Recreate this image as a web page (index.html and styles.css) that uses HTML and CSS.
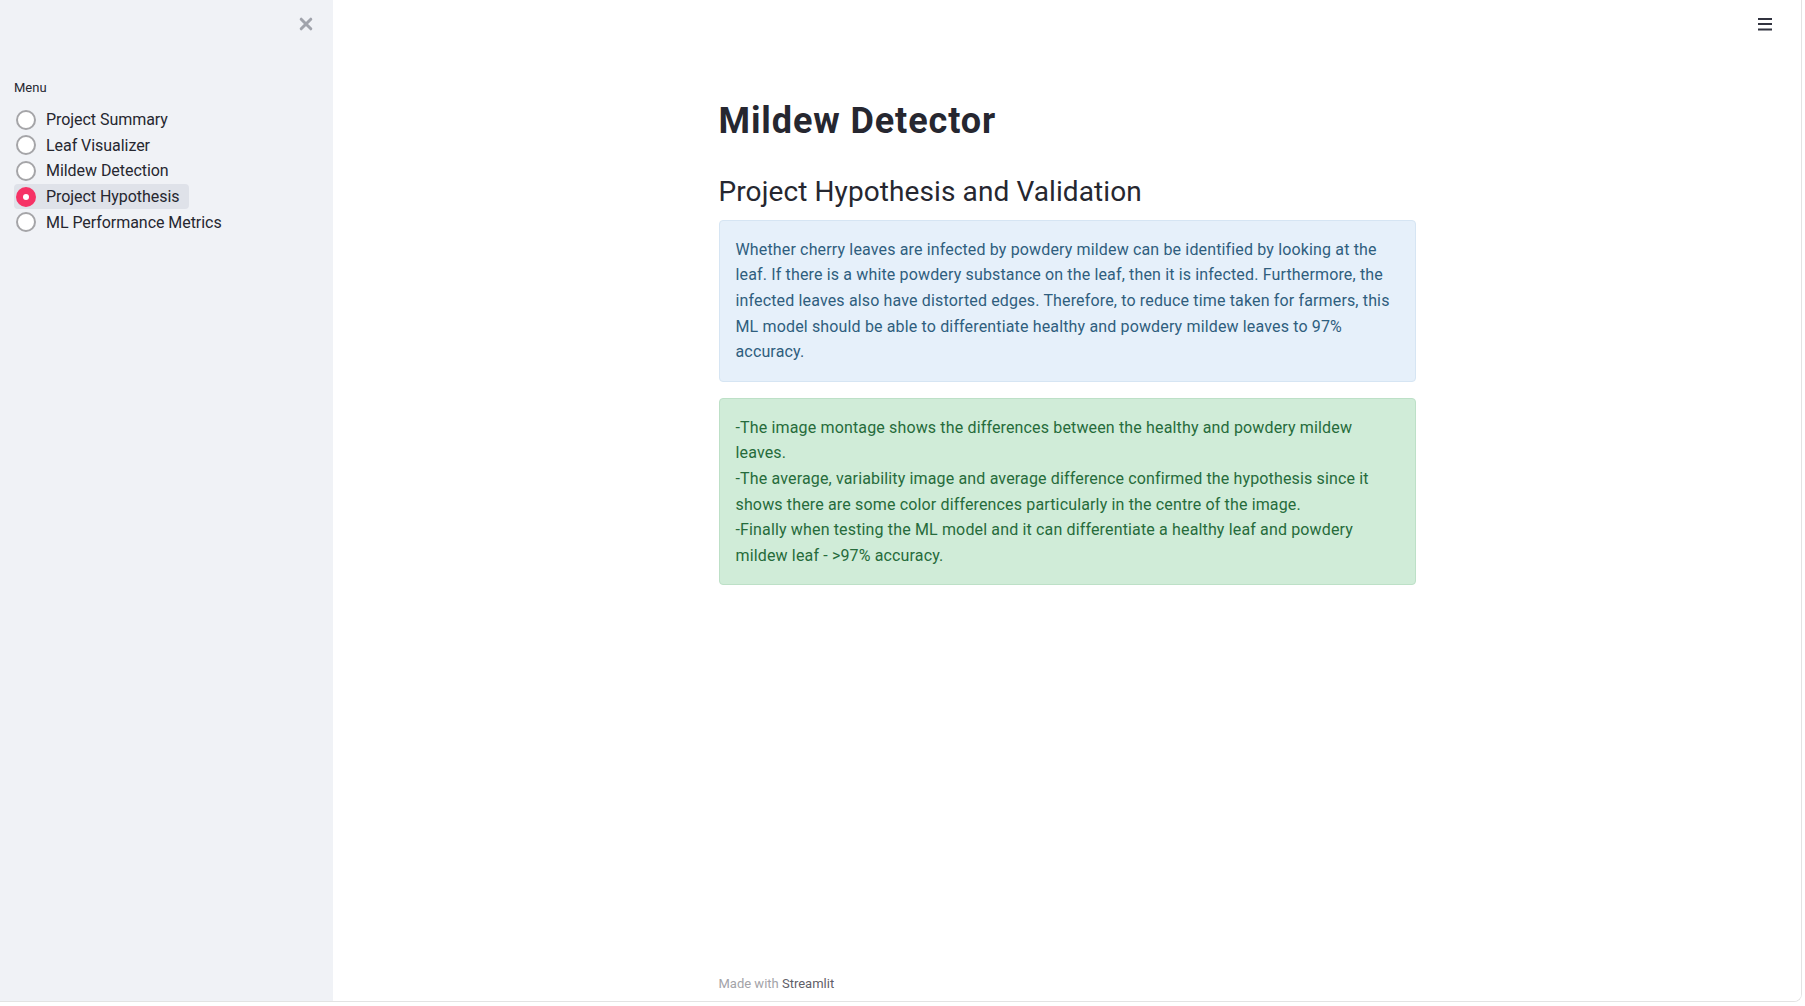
FILE: index.html
```html
<!DOCTYPE html>
<html lang="en">
<head>
<meta charset="utf-8">
<title>Mildew Detector</title>
<link rel="stylesheet" href="styles.css">
</head>
<body>
<div class="app">
  <aside class="sidebar">
    <div class="sidebar-top">
      <button class="close-btn" aria-label="Close sidebar">
        <svg width="14" height="14" viewBox="0 0 14 14"><path d="M2.2 2.2 L11.8 11.8 M11.8 2.2 L2.2 11.8" stroke="#a0a3ab" stroke-width="3" stroke-linecap="round"/></svg>
      </button>
    </div>
    <div class="menu">
      <div class="menu-label">Menu</div>
      <div class="radio-group">
        <label class="radio"><span class="dot"></span><span class="radio-text">Project Summary</span></label>
        <label class="radio"><span class="dot"></span><span class="radio-text">Leaf Visualizer</span></label>
        <label class="radio"><span class="dot"></span><span class="radio-text">Mildew Detection</span></label>
        <label class="radio selected"><span class="dot"></span><span class="radio-text">Project Hypothesis</span></label>
        <label class="radio"><span class="dot"></span><span class="radio-text">ML Performance Metrics</span></label>
      </div>
    </div>
  </aside>
  <main class="main">
    <header class="topbar">
      <button class="menu-btn" aria-label="Menu">
        <svg width="16" height="14" viewBox="0 0 16 14"><path d="M1 2 H15 M1 7 H15 M1 12.5 H15" stroke="#31333f" stroke-width="1.8"/></svg>
      </button>
    </header>
    <div class="block">
      <h1 class="title">Mildew Detector</h1>
      <h2 class="subtitle">Project Hypothesis and Validation</h2>
      <div class="alert info">Whether cherry leaves are infected by powdery mildew can be identified by looking at the leaf. If there is a white powdery substance on the leaf, then it is infected. Furthermore, the infected leaves also have distorted edges. Therefore, to reduce time taken for farmers, this ML model should be able to differentiate healthy and powdery mildew leaves to 97% accuracy.</div>
      <div class="alert success">-The image montage shows the differences between the healthy and powdery mildew leaves.<br>-The average, variability image and average difference confirmed the hypothesis since it shows there are some color differences particularly in the centre of the image.<br>-Finally when testing the ML model and it can differentiate a healthy leaf and powdery mildew leaf - &gt;97% accuracy.</div>
    </div>
    <footer class="footer">
      <div class="footer-inner">Made with <span class="brand">Streamlit</span></div>
    </footer>
  </main>
</div>
</body>
</html>
```
FILE: styles.css
```css
* { box-sizing: border-box; }
html, body {
  margin: 0;
  padding: 0;
  background: #ffffff;
}
body {
  font-family: Roboto, "Liberation Sans", sans-serif;
  color: #262730;
  width: 1805px;
  height: 1006px;
  overflow: hidden;
}
.app {
  display: flex;
  width: 1802px;
  height: 1002px;
  border-right: 1px solid #e3e3e3;
  border-bottom: 1px solid #e3e3e3;
  border-bottom-right-radius: 8px;
  overflow: hidden;
}
.sidebar {
  width: 333px;
  flex: 0 0 333px;
  background: #f0f2f6;
  display: flex;
  flex-direction: column;
}
.sidebar-top {
  height: 48px;
  display: flex;
  justify-content: flex-end;
  align-items: center;
  padding-right: 20px;
}
.close-btn, .menu-btn {
  border: 0;
  background: transparent;
  padding: 0;
  display: flex;
  align-items: center;
  justify-content: center;
  cursor: pointer;
}
.close-btn { width: 14px; height: 14px; }
.menu {
  padding: 32px 14px 0 14px;
}
.menu-label {
  font-size: 13px;
  line-height: 16px;
  color: #262730;
  margin-bottom: 11px;
}
.radio-group {
  display: flex;
  flex-direction: column;
  align-items: flex-start;
}
.radio {
  display: flex;
  align-items: center;
  height: 25.6px;
  padding: 0 9px 0 2px;
  border-radius: 4px;
  font-size: 16px;
  letter-spacing: -0.05px;
  color: #262730;
}
.radio.selected { background: #dfe2e9; }
.dot {
  width: 20px;
  height: 20px;
  border-radius: 50%;
  border: 2px solid #a5a5a8;
  background: #ffffff;
  margin-right: 10px;
  flex: 0 0 20px;
  display: flex;
  align-items: center;
  justify-content: center;
}
.radio.selected .dot {
  border-color: #f63366;
  background: #f63366;
}
.radio.selected .dot::after {
  content: "";
  width: 6px;
  height: 6px;
  border-radius: 50%;
  background: #ffffff;
}
.main {
  flex: 1;
  display: flex;
  flex-direction: column;
  background: #ffffff;
}
.topbar {
  height: 48px;
  display: flex;
  justify-content: flex-end;
  align-items: center;
  padding-right: 28px;
}
.menu-btn { width: 16px; height: 14px; }
.block {
  width: 697px;
  margin: 52px auto 0 auto;
  display: flex;
  flex-direction: column;
}
.title {
  margin: 0;
  font-size: 36px;
  line-height: 43.2px;
  font-weight: 700;
  letter-spacing: 0.9px;
  color: #262730;
}
.subtitle {
  margin: 32px 0 11px 0;
  font-size: 28px;
  line-height: 33.6px;
  font-weight: 400;
  letter-spacing: 0.1px;
  color: #262730;
}
.alert {
  padding: 16px;
  font-size: 16px;
  line-height: 25.6px;
  letter-spacing: 0.15px;
  border-radius: 4px;
  border: 1px solid transparent;
}
.alert.info {
  background: #e6f0fa;
  border-color: #d6e5f3;
  color: #2f5e7e;
}
.alert.success {
  margin-top: 16px;
  background: #d0ecd8;
  border-color: #bde0c7;
  color: #266b3b;
}
.footer {
  margin-top: auto;
  padding-bottom: 9px;
}
.footer-inner {
  width: 697px;
  margin: 0 auto;
  font-size: 13px;
  line-height: 16px;
  color: #a3a3a8;
}
.brand { color: #5f6068; }
```
